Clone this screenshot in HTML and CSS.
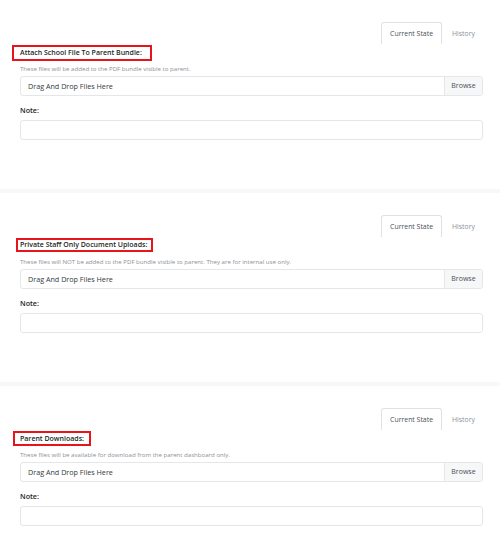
FILE: index.html
```html
<!DOCTYPE html>
<html>
<head>
<meta charset="utf-8">
<link rel="stylesheet" href="styles.css">
</head>
<body>
<div class="section">
  <div class="tabs">
    <div class="tab active">Current State</div>
    <div class="tab">History</div>
  </div>
  <div class="title-row"><span class="title mark-1">Attach School File To Parent Bundle:</span></div>
  <div class="help">These files will be added to the PDF bundle visible to parent.</div>
  <div class="file-input">
    <div class="file-label">Drag And Drop Files Here</div>
    <div class="browse">Browse</div>
  </div>
  <div class="note-label">Note:</div>
  <div class="note-input"></div>
</div>
<div class="section">
  <div class="tabs">
    <div class="tab active">Current State</div>
    <div class="tab">History</div>
  </div>
  <div class="title-row"><span class="title mark-2">Private Staff Only Document Uploads:</span></div>
  <div class="help">These files will NOT be added to the PDF bundle visible to parent. They are for internal use only.</div>
  <div class="file-input">
    <div class="file-label">Drag And Drop Files Here</div>
    <div class="browse">Browse</div>
  </div>
  <div class="note-label">Note:</div>
  <div class="note-input"></div>
</div>
<div class="section">
  <div class="tabs">
    <div class="tab active">Current State</div>
    <div class="tab">History</div>
  </div>
  <div class="title-row"><span class="title mark-3">Parent Downloads:</span></div>
  <div class="help">These files will be available for download from the parent dashboard only.</div>
  <div class="file-input">
    <div class="file-label">Drag And Drop Files Here</div>
    <div class="browse">Browse</div>
  </div>
  <div class="note-label">Note:</div>
  <div class="note-input"></div>
</div>
</body>
</html>
```
FILE: styles.css
```css
html, body {
  margin: 0;
  padding: 0;
  background: #fff;
}
body {
  font-family: "Open Sans", "Noto Sans", sans-serif;
  color: #1c1f23;
}
.section {
  box-sizing: content-box;
  height: 167px;
  padding: 22px 17px 0 20px;
  border-bottom: 4px solid #f8f8f8;
}
.tabs {
  display: flex;
  justify-content: flex-end;
  height: 22px;
}
.tab {
  font-size: 6.9px;
  line-height: 21px;
  padding: 0 7px 0 9px;
  color: #8a9199;
  border: 1px solid transparent;
  border-bottom: none;
  border-radius: 3px 3px 0 0;
}
.tab.active {
  color: #495057;
  border-color: #dee2e6;
  padding: 0 8px 0 8px;
}
.title-row {
  margin-top: 1px;
  height: 16px;
  display: flex;
}
.title {
  font-size: 7px;
  font-weight: 600;
  line-height: 12px;
  border: 2px solid #e8141c;
  margin-left: -8px;
  padding: 0 8px 0 6px;
}
.mark-2 {
  margin-left: -4px;
  padding-left: 2px;
  padding-right: 4px;
  height: 10px;
  line-height: 10px;
}
.mark-3 {
  margin-left: -7px;
  padding-left: 5px;
  padding-right: 5px;
  height: 11px;
  line-height: 11px;
}
.help {
  margin-top: 3px;
  font-size: 6.1px;
  line-height: 10px;
  color: #8c9196;
}
.file-input {
  margin-top: 2px;
  height: 18px;
  border: 1px solid #e4e6e8;
  border-radius: 3px;
  display: flex;
  align-items: stretch;
}
.file-label {
  flex: 1;
  padding-left: 7px;
  font-size: 7.2px;
  line-height: 18px;
  color: #343a40;
}
.browse {
  width: 37px;
  border-left: 1px solid #e4e6e8;
  background: #f6f7f8;
  font-size: 7px;
  line-height: 18px;
  text-align: center;
  color: #495057;
  border-radius: 0 3px 3px 0;
}
.note-label {
  margin-top: 8px;
  font-size: 7.2px;
  font-weight: 600;
  line-height: 12px;
}
.note-input {
  margin-top: 4px;
  height: 18px;
  border: 1px solid #e4e6e8;
  border-radius: 3px;
}
```
